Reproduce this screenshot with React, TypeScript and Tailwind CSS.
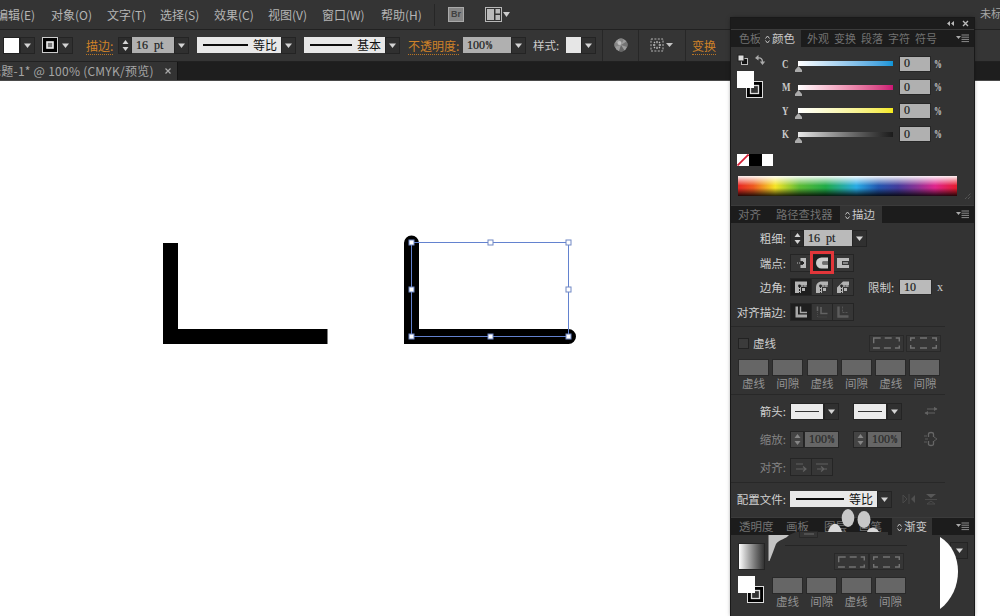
import React from "react";

type Kids = { children?: React.ReactNode; className?: string };

const cjk = "font-['Noto_Sans_CJK_SC',sans-serif]";
const serif = "font-['Liberation_Serif',serif]";

function Caret({ className = "" }: { className?: string }) {
  return (
    <svg width="7" height="5" viewBox="0 0 7 5" className={`shrink-0 ${className}`}>
      <path d="M0 0.5H7L3.5 5Z" fill="currentColor" />
    </svg>
  );
}

function DropButton({ className = "w-[15px]" }: { className?: string }) {
  return (
    <div className={`flex h-[17px] shrink-0 items-center justify-center border border-[#242424] bg-[#303030] text-[#d4d4d4] ${className}`}>
      <Caret />
    </div>
  );
}

function Stepper({ dim = false }: { dim?: boolean }) {
  return (
    <div className={`flex h-[17px] w-[14px] shrink-0 flex-col items-center justify-center gap-[3px] border border-[#242424] ${dim ? "bg-[#444] text-[#858585]" : "bg-[#2c2c2c] text-[#d4d4d4]"}`}>
      <svg width="7" height="4" viewBox="0 0 7 4"><path d="M0.5 4H6.5L3.5 0Z" fill="currentColor" /></svg>
      <svg width="7" height="4" viewBox="0 0 7 4"><path d="M0.5 0H6.5L3.5 4Z" fill="currentColor" /></svg>
    </div>
  );
}

function Percent({ className = "" }: { className?: string }) {
  return <span className={`inline-block w-[6px] origin-left scale-x-[0.65] font-bold ${className}`}>%</span>;
}

function Field({ children, className = "" }: Kids) {
  return (
    <div className={`flex h-4 shrink-0 items-center whitespace-pre pb-px pl-[4px] text-[12px] leading-none ${serif} ${className}`}>
      <span className="[-webkit-text-stroke:0.2px]">{children}</span>
    </div>
  );
}

function FillStroke() {
  return (
    <svg width="27" height="28" viewBox="0 0 27 28" className="shrink-0">
      <rect x="9.5" y="10.5" width="16" height="16" fill="#000" stroke="#ddd" />
      <rect x="13.5" y="14.5" width="8" height="8" fill="#333" stroke="#ddd" strokeWidth="1.3" />
      <rect x="0" y="0" width="17" height="17" fill="#fff" />
    </svg>
  );
}

function PanelMenu() {
  return (
    <svg width="14" height="9" viewBox="0 0 14 9" className="shrink-0">
      <path d="M0 2H5L2.5 5Z" fill="#aaa" />
      <path d="M5.5 1H13M5.5 3.2H13M5.5 5.4H13M5.5 7.6H13" stroke="#8c8c8c" />
    </svg>
  );
}

function Diamond() {
  return (
    <svg width="5" height="9" viewBox="0 0 5 9" className="mt-px shrink-0">
      <path d="M0.5 3.5L2.5 1L4.5 3.5M0.5 5.5L2.5 8L4.5 5.5" fill="none" stroke="#c4c4c4" />
    </svg>
  );
}

function TabBar({ children }: Kids) {
  return (
    <div className="flex h-[18px] shrink-0 items-end justify-between border-t border-[#3b3b3b] bg-[#1c1c1c] pr-1">
      <div className="flex items-end">{children}</div>
      <div className="pb-[4px]"><PanelMenu /></div>
    </div>
  );
}

function Tab({ children, className = "" }: Kids) {
  return <div className={`h-[17px] shrink-0 whitespace-nowrap leading-[17px] text-[#727272] ${className}`}>{children}</div>;
}

function ActiveTab({ children, className = "" }: Kids) {
  return (
    <div className={`flex h-[17px] shrink-0 items-center gap-[2px] whitespace-nowrap bg-[#333] pl-[5px] text-[11.5px] leading-[17px] text-[#c9c9c9] ${className}`}>
      <Diamond />
      {children}
    </div>
  );
}

function Label({ children, dim = false }: Kids & { dim?: boolean }) {
  return (
    <div className={`w-[59px] shrink-0 whitespace-nowrap pr-[4px] text-right text-[11.5px] leading-4 ${dim ? "text-[#858585]" : "text-[#d0d0d0]"}`}>
      <span>{children}</span>
      <span>:</span>
    </div>
  );
}

function Row({ children, className = "" }: Kids) {
  return <div className={`flex shrink-0 items-center ${className}`}>{children}</div>;
}

function IconButton({ children, on = false }: Kids & { on?: boolean }) {
  return (
    <div className={`flex h-[18px] w-[22px] shrink-0 items-center justify-center border border-[#252525] ${on ? "bg-[#1e1e1e]" : "bg-[#363636]"}`}>
      <svg width="14" height="14" viewBox="0 0 14 14" className="shrink-0">{children}</svg>
    </div>
  );
}

function CornerIcon({ outline, ink }: { outline: string; ink: string }) {
  return (
    <>
      <path d={outline} fill="#b4b4b4" />
      <circle cx="5.5" cy="6" r="1.4" fill={ink} />
      <path d="M5.5 6V13M5.5 6H13" stroke={ink} strokeDasharray="2 1" />
      <path d="M8 8H11V11H8Z" fill="#b4b4b4" />
    </>
  );
}

function Rule({ className = "" }: { className?: string }) {
  return <div className={`h-px w-[214px] shrink-0 bg-[#282828] ${className}`} />;
}

function DashButton({ corners = false }: { corners?: boolean }) {
  return (
    <div className="flex h-[17px] w-[35px] shrink-0 items-center justify-center border border-[#292929] bg-[#363636]">
      <svg width="27" height="12" viewBox="0 0 27 12">
        {corners ? (
          <path d="M0.7 4V1H5M10 1H17M22 1H26.3V4M26.3 8V11H22M17 11H10M5 11H0.7V8" fill="none" stroke="#737373" strokeWidth="1.4" />
        ) : (
          <rect x="0.7" y="1" width="25.6" height="10" fill="none" stroke="#737373" strokeWidth="1.4" strokeDasharray="7 4" />
        )}
      </svg>
    </div>
  );
}

const dashLabels = ["虚线", "间隙", "虚线", "间隙", "虚线", "间隙"];

function DashFields({ count }: { count: number }) {
  return (
    <div className="flex gap-[3.3px]">
      {dashLabels.slice(0, count).map((label, i) => (
        <div key={i} className="w-[31px] shrink-0">
          <div className="h-[17px] border border-[#292929] bg-[#666]" />
          <div className="whitespace-nowrap text-center text-[11.5px] leading-[15px] text-[#929292]">{label}</div>
        </div>
      ))}
    </div>
  );
}

function ArrowPicker() {
  return (
    <div className="flex w-[49px] shrink-0">
      <div className="flex h-[17px] w-[34px] items-center justify-center border border-[#252525] bg-[#ebebeb]">
        <div className="h-px w-6 bg-[#333]" />
      </div>
      <DropButton />
    </div>
  );
}

function ProfilePicker({ label, className = "" }: { label: string; className?: string }) {
  return (
    <div className={`flex h-4 shrink-0 items-center justify-between bg-[#e8e8e8] pl-[6px] pr-1 text-[12px] leading-4 text-[#111] ${className}`}>
      <div className="mr-[5px] h-[2px] grow bg-[#0c0c0c]" />
      <span>{label}</span>
    </div>
  );
}

const menuItems = [
  ["对象(O)", "w-[56px]"],
  ["文字(T)", "w-[53px]"],
  ["选择(S)", "w-[54px]"],
  ["效果(C)", "w-[54px]"],
  ["视图(V)", "w-[54px]"],
  ["窗口(W)", "w-[59px]"],
  ["帮助(H)", "w-[53px]"],
];

function MenuBar() {
  return (
    <div className="flex h-[29px] shrink-0 items-center overflow-hidden bg-[#343434] text-[12px] text-[#b4b4b4]">
      <div className="-ml-[4px] flex w-[438px] shrink-0">
        <div className="w-[55px] shrink-0 whitespace-nowrap">编辑(E)</div>
        {menuItems.map(([label, width]) => (
          <div key={label} className={`shrink-0 whitespace-nowrap ${width}`}>{label}</div>
        ))}
      </div>
      <div className="h-[22px] w-px bg-[#262626]" />
      <div className="ml-[13px] flex h-[15px] w-[16px] items-center justify-center border border-[#aaa] bg-[#858585] font-['Liberation_Sans',sans-serif] text-[9px] font-bold leading-none text-[#404040]">Br</div>
      <svg width="25" height="15" viewBox="0 0 25 15" className="ml-[21px] shrink-0">
        <rect x="0.5" y="0.5" width="16" height="14" fill="#333" stroke="#b8b8b8" />
        <path d="M2 2H9V13H2ZM10.5 2H15V6.5H10.5ZM10.5 8H15V13H10.5Z" fill="#bababa" />
        <path d="M18 5H25L21.5 10Z" fill="#ccc" />
      </svg>
      <div className="-mt-[3px] ml-auto w-5 shrink-0 whitespace-nowrap text-[11px] text-[#a5a5a5]">未标</div>
    </div>
  );
}

function OrangeLink({ children, className = "" }: Kids) {
  return (
    <div className={`shrink-0 whitespace-nowrap text-[12px] leading-[17px] text-[#cf8228] ${className}`}>
      <span className="border-b border-dotted border-[#b87424]">{children}</span>
    </div>
  );
}

function ControlBar() {
  return (
    <div className="flex h-[33px] shrink-0 items-center overflow-hidden border-b border-t border-[#212121] bg-[#353535] pb-px">
      <div className="ml-[3px] h-[17px] w-[17px] shrink-0 border border-[#222] bg-white" />
      <DropButton />
      <svg width="16" height="16" viewBox="0 0 16 16" className="ml-[7px] shrink-0">
        <rect x="0.5" y="0.5" width="15" height="15" fill="#000" stroke="#ccc" />
        <rect x="5" y="5" width="6" height="6" fill="#777" stroke="#eee" strokeWidth="1.6" />
      </svg>
      <DropButton />
      <OrangeLink className="ml-[13px] w-8">描边:</OrangeLink>
      <Stepper />
      <Field className="w-[42px] bg-[#b0b0b0] text-[#1c1c1c] [word-spacing:3px]">16 pt</Field>
      <DropButton />
      <ProfilePicker label="等比" className="ml-[8px] w-[84px]" />
      <DropButton />
      <ProfilePicker label="基本" className="ml-[8px] w-[81px]" />
      <DropButton />
      <OrangeLink className="ml-[8px] w-[55px]">不透明度:</OrangeLink>
      <Field className="w-[48px] bg-[#b0b0b0] text-[#1c1c1c]">100<Percent /></Field>
      <DropButton />
      <div className="ml-[7px] w-[33px] shrink-0 whitespace-nowrap text-[11.5px] leading-4 text-[#cdcdcd]">样式:</div>
      <div className="h-[16px] w-[15px] shrink-0 bg-[#e6e6e6]" />
      <DropButton />
      <div className="ml-[6px] h-[31px] w-px bg-[#272727]" />
      <svg width="14" height="14" viewBox="0 0 14 14" className="ml-[11px] shrink-0">
        <circle cx="7" cy="7" r="6.5" fill="#9c9c9c" />
        <path d="M7 7L5 0.8A6.5 6.5 0 0 1 10 1.2Z" fill="#828282" />
        <path d="M7 7L12.5 3.5A6.5 6.5 0 0 1 13 9Z" fill="#747474" />
        <path d="M7 7L10.5 12.5A6.5 6.5 0 0 1 5 13Z" fill="#666" />
        <path d="M7 7L0.8 9A6.5 6.5 0 0 1 1.2 4Z" fill="#858585" />
        <circle cx="5.5" cy="5" r="2" fill="#c0c0c0" />
      </svg>
      <div className="ml-[10px] h-[31px] w-px bg-[#272727]" />
      <svg width="23" height="14" viewBox="0 0 23 14" className="ml-[11px] shrink-0">
        <rect x="1" y="1" width="12" height="12" fill="none" stroke="#b5b5b5" strokeDasharray="2 1.4" />
        <path d="M7 3V5.3M7 8.7V11M3 7H5.3M8.7 7H11M4 4L5 5M10 4L9 5M4 10L5 9M10 10L9 9" stroke="#bbb" strokeWidth="1.3" />
        <path d="M16 5H23L19.5 9Z" fill="#c4c4c4" />
      </svg>
      <div className="ml-[12px] h-[31px] w-px bg-[#272727]" />
      <OrangeLink className="ml-[6px] w-[30px]">变换</OrangeLink>
    </div>
  );
}

function DocumentTabs() {
  return (
    <div className="flex h-[19px] shrink-0 overflow-hidden border-b border-[#4a4a4a] bg-[#1e1e1e]">
      <div className="flex w-[178px] shrink-0 items-center border-r border-[#151515] bg-[#333] text-[#a5a5a5]">
        <div className="-ml-[11px] w-[176px] shrink-0 whitespace-nowrap text-[12px] leading-[18px] tracking-[0.25px]">标题-1* @ 100% (CMYK/预览)</div>
        <svg width="6" height="6" viewBox="0 0 6 6" className="shrink-0"><path d="M0.5 0.5L5.5 5.5M5.5 0.5L0.5 5.5" stroke="#aaa" strokeWidth="1.2" /></svg>
      </div>
    </div>
  );
}

const handles = [
  [411.5, 161.5], [490.5, 161.5], [568.5, 161.5],
  [411.5, 208.5], [568.5, 208.5],
  [411.5, 255.5], [490.5, 255.5], [568.5, 255.5],
];

function Artwork() {
  return (
    <svg width="731" height="535" viewBox="0 0 731 535" className="block">
      <path d="M170.5 162V255.5H327.5" fill="none" stroke="#000" strokeWidth="15" />
      <path d="M411.5 162V255.5H568.5" fill="none" stroke="#000" strokeWidth="15" strokeLinecap="round" />
      <path d="M411.5 255.5V161.5H568.5V255.5Z" fill="none" stroke="#6382cf" />
      {handles.map(([x, y]) => (
        <rect key={`${x}-${y}`} x={x - 2.5} y={y - 2.5} width="5" height="5" fill="#fff" stroke="#7088c4" />
      ))}
    </svg>
  );
}

const channels = [
  ["C", "from-white to-[#0b95d8]"],
  ["M", "from-white to-[#cc1274]"],
  ["Y", "from-white to-[#f5ea14]"],
  ["K", "from-[#e8e8e8] to-[#1b1b1b]"],
];

function ColorPanel() {
  return (
    <>
      <TabBar>
        <Tab className="w-[29px] pl-[8px] text-[11px]">色板</Tab>
        <ActiveTab className="w-[41px]">颜色</ActiveTab>
        <Tab className="ml-[6px] w-[27px] text-[11px]">外观</Tab>
        <Tab className="w-[27px] text-[11px]">变换</Tab>
        <Tab className="w-[27px] text-[11px]">段落</Tab>
        <Tab className="w-[27px] text-[11px]">字符</Tab>
        <Tab className="w-[27px] text-[11px]">符号</Tab>
      </TabBar>
      <div className="flex h-[158px] shrink-0 flex-col bg-[#333]">
        <div className="flex pl-[6px] pt-[5px]">
          <div className="w-[45px] shrink-0">
            <svg width="30" height="12" viewBox="0 0 30 12" className="mb-[5px] mt-[2px] block">
              <rect x="4.5" y="4.5" width="6" height="6" fill="#111" stroke="#bbb" />
              <rect x="1" y="1" width="6" height="6" fill="#ddd" stroke="#222" />
              <path d="M21 4C24 3.5 25.5 5 25.5 8" fill="none" stroke="#aaa" strokeWidth="1.3" />
              <path d="M18 4L21.5 0.8V6.5ZM25.5 11L22.8 7.5H28.2Z" fill="#aaa" />
            </svg>
            <FillStroke />
          </div>
          <div>
            {channels.map(([name, gradient]) => (
              <div key={name} className={`flex h-[23.5px] items-center text-[12px] leading-none text-[#c9c9c9] ${serif}`}>
                <div className="w-[13px] origin-left scale-x-[0.75] font-bold">{name}</div>
                <div className="relative w-[98px]">
                  <div className={`ml-[3px] h-[5px] w-[95px] bg-linear-to-r ${gradient}`} />
                  <svg width="7" height="6" viewBox="0 0 7 6" className="absolute left-0 top-[5px]"><path d="M3.5 0L7 4V6H0V4Z" fill="#aaa" /></svg>
                </div>
                <Field className="ml-[6px] w-[32px] border border-[#262626] bg-[#b0b0b0] pl-[3px] text-[#1c1c1c]">0</Field>
                <Percent className="ml-[3px]" />
              </div>
            ))}
          </div>
        </div>
        <div className="ml-[6px] mt-[8px] flex h-3">
          <svg width="12" height="12" viewBox="0 0 12 12"><rect width="12" height="12" fill="#fff" /><path d="M0.5 11.5L11.5 0.5" stroke="#d51f35" strokeWidth="1.8" /></svg>
          <div className="w-[12.5px] bg-black" />
          <div className="w-[11.5px] bg-white" />
        </div>
        <div className="mt-[10px] flex items-end">
          <div className="ml-[7px] h-5 w-[219px] bg-[linear-gradient(to_bottom,rgba(255,255,255,.95),rgba(255,255,255,0)_48%,rgba(0,0,0,0)_60%,rgba(0,0,0,.85)),linear-gradient(to_right,#e72724,#ee5a20_7%,#f6e425_17%,#5dbb35_28%,#20ab48_40%,#28abe5_54%,#2257b0_64%,#433b9c_73%,#8e3295_82%,#e0258c_90%,#e51c2c)]" />
          <svg width="8" height="8" viewBox="0 0 8 8" className="-mb-1 ml-[7px]"><path d="M1 7L7 1M4 7L7 4" stroke="#666" strokeDasharray="1 1" /></svg>
        </div>
      </div>
    </>
  );
}

function StrokePanel() {
  return (
    <>
      <TabBar>
        <Tab className="w-[45px] pl-[7px] text-[11.5px]">对齐</Tab>
        <Tab className="w-[59px] text-[11.3px]">路径查找器</Tab>
        <ActiveTab className="ml-[5px] w-[42px]">描边</ActiveTab>
      </TabBar>
      <div className="flex h-[294px] shrink-0 flex-col bg-[#333] pt-[3px]">
        <Row className="h-6">
          <Label>粗细</Label>
          <Stepper />
          <Field className="w-[48px] bg-[#bababa] text-[#1c1c1c] [word-spacing:3px]">16 pt</Field>
          <DropButton />
        </Row>
        <Row className="h-[25px]">
          <Label>端点</Label>
          <IconButton>
            <path d="M6.5 2H12V12H6.5V9H9V5H6.5Z" fill="#bbb" />
            <path d="M3 7H9" stroke="#bbb" strokeDasharray="1 1" />
            <path d="M7 6H10V8H7Z" fill="#222" />
          </IconButton>
          <div className="relative -ml-px">
            <IconButton on>
              <path d="M13 1.5H6.5A5.5 5.5 0 0 0 6.5 12.5H13V8.5H7.5V5.5H13Z" fill="#ccc" />
              <path d="M8 7H13" stroke="#bbb" />
            </IconButton>
            <div className="absolute -bottom-[2.5px] -left-px -right-px -top-[2.5px] border-[3px] border-[#e2363a]" />
          </div>
          <div className="-ml-px">
            <IconButton>
              <path d="M1 2H13V5H6V9H13V12H1Z" fill="#bbb" />
              <path d="M7 7H12" stroke="#bbb" strokeWidth="1.2" />
            </IconButton>
          </div>
        </Row>
        <Row className="h-6">
          <Label>边角</Label>
          <IconButton on><CornerIcon ink="#1e1e1e" outline="M1 1.5H13V7H7V13H1Z" /></IconButton>
          <div className="-ml-px"><IconButton><CornerIcon ink="#2a2a2a" outline="M13 1.5H7C3 1.5 1 4 1 7.5V13H7V7H13Z" /></IconButton></div>
          <div className="-ml-px"><IconButton><CornerIcon ink="#2a2a2a" outline="M13 1.5H7L1 7.5V13H7V7H13Z" /></IconButton></div>
          <div className="ml-[14px] w-[31px] shrink-0 whitespace-nowrap text-[11.5px] leading-4 text-[#cdcdcd]">限制:</div>
          <Field className="w-[33px] border border-[#2a2a2a] bg-[#bababa] pl-[3px] text-[#1c1c1c]">10</Field>
          <span className={`ml-[5px] text-[12px] leading-none text-[#ccc] ${serif}`}>x</span>
        </Row>
        <Row className="h-[25px]">
          <Label>对齐描边</Label>
          <IconButton on>
            <path d="M1.5 1.5H4V9.5H13V12.5H1.5Z" fill="#a8a8a8" />
            <path d="M6.5 1.5V7.5H13" fill="none" stroke="#a8a8a8" strokeWidth="1.4" />
          </IconButton>
          <div className="-ml-px"><IconButton>
            <path d="M2.5 1.5V6M6 2V8.5H12.5" fill="none" stroke="#626262" strokeWidth="1.6" />
            <path d="M2.5 7V12H12" fill="none" stroke="#4c4c4c" strokeDasharray="1 1" />
          </IconButton></div>
          <div className="-ml-px"><IconButton>
            <path d="M2.5 1.5V11.5H12.5" fill="none" stroke="#5c5c5c" strokeWidth="2.4" />
            <path d="M6.5 1.5V7.5H12.5" fill="none" stroke="#555" strokeDasharray="2 1" />
          </IconButton></div>
        </Row>
        <Rule className="mt-[2px]" />
        <Row className="h-8 pl-[7px]">
          <div className="h-[11px] w-[11px] border border-[#222] bg-[#3b3b3b]" />
          <div className="ml-[4px] w-[116px] text-[11.5px] leading-4 text-[#cfcfcf]">虚线</div>
          <DashButton />
          <div className="ml-[2px]"><DashButton corners /></div>
        </Row>
        <div className="ml-[7px]"><DashFields count={6} /></div>
        <Rule className="mt-[3px]" />
        <Row className="h-8">
          <Label>箭头</Label>
          <ArrowPicker />
          <div className="ml-[14px]"><ArrowPicker /></div>
          <svg width="14" height="10" viewBox="0 0 14 10" className="ml-[22px]"><path d="M3 3H13M1 7H11" stroke="#626262" strokeWidth="1.2" /><path d="M10 0.8L13.5 3L10 5ZM4 5L0.5 7L4 9.2Z" fill="#626262" /></svg>
        </Row>
        <Row className="h-6">
          <Label dim>缩放</Label>
          <Stepper dim />
          <Field className="h-[17px] w-[35px] border border-[#262626] bg-[#666] pl-[2px] text-[#292929]">100<Percent /></Field>
          <div className="ml-[14px]"><Stepper dim /></div>
          <Field className="h-[17px] w-[35px] border border-[#262626] bg-[#666] pl-[2px] text-[#292929]">100<Percent /></Field>
          <svg width="14" height="16" viewBox="0 0 14 16" className="ml-[22px]"><path d="M4.5 6V3Q4.5 1.5 7 1.5T9.5 3V6M4.5 10V13Q4.5 14.5 7 14.5T9.5 13V10" fill="none" stroke="#666" strokeWidth="1.3" /><path d="M0 5H3M0 11H3M1 8H4M10 6L13 8L10 10" fill="none" stroke="#5c5c5c" /></svg>
        </Row>
        <Row className="h-[31px]">
          <Label dim>对齐</Label>
          <IconButton><path d="M2 4H9M2 9H12M9 6.5L12 9L9 11.5" fill="none" stroke="#606060" strokeWidth="1.2" /></IconButton>
          <div className="-ml-px"><IconButton><path d="M1 4H13M2 9H12M6 6.5L9 9L6 11.5" fill="none" stroke="#606060" strokeWidth="1.2" /></IconButton></div>
        </Row>
        <Rule />
        <Row className="h-8">
          <Label>配置文件</Label>
          <ProfilePicker label="等比" className="w-[87px]" />
          <DropButton />
          <svg width="36" height="14" viewBox="0 0 36 14" className="ml-[10px]"><path d="M1 3V11M1 3L5 7L1 11M7 2V12" fill="none" stroke="#4a4a4a" /><path d="M13 3V11L9 7Z" fill="#505050" /><path d="M24 2H34L29 6Z" fill="#585858" /><path d="M23 7.5H35M25 12H33L29 9Z" fill="none" stroke="#4a4a4a" /></svg>
        </Row>
      </div>
    </>
  );
}

function GradientPanel() {
  return (
    <>
      <TabBar>
        <Tab className="w-[55px] pl-[8px] text-[11.5px]">透明度</Tab>
        <Tab className="w-[38px] text-[11.5px]">画板</Tab>
        <Tab className="w-[35px] text-[11.5px]">图层</Tab>
        <Tab className="w-[33px] text-[11.5px]">画笔</Tab>
        <ActiveTab className="w-[40px]">渐变</ActiveTab>
      </TabBar>
      <div className="flex h-[81px] shrink-0 overflow-hidden bg-[#333] pl-[7px]">
        <div className="w-[31px] shrink-0 pt-2">
          <div className="h-[27px] w-[27px] border border-[#252525] bg-linear-to-r from-white to-[#333]" />
          <div className="mt-[6px]"><FillStroke /></div>
        </div>
        <div className="w-[171px] shrink-0">
          <div className="flex h-[11px] items-end">
            <div className="ml-[16px] h-px w-[122px] bg-[#252525]" />
          </div>
          <div className="mt-[7px] flex pl-[65px]">
            <DashButton />
            <DashButton corners />
          </div>
          <div className="ml-[3px] mt-[7px]"><DashFields count={4} /></div>
        </div>
        <svg width="18" height="76" viewBox="0 0 18 76" className="relative z-10 shrink-0"><path d="M0 2C24 16 24 56 0 74Z" fill="#fff" /></svg>
        <div className="-ml-2 mt-[7px]"><DropButton className="w-[18px]" /></div>
      </div>
      <svg width="120" height="60" viewBox="0 0 120 60" className="absolute left-[37px] top-[490px]">
        <path d="M21 27L28 24H120V32H21Z" fill="#333" />
        <path d="M0.5 27H21C18 31 12 31 8 36C6 41 4 47 1.5 53H0.5Z" fill="#c4c4c4" />
        <path d="M31.5 23.5H49.5V29.5H31.5Z" fill="#353535" stroke="#282828" />
        <path d="M36 26H46" stroke="#505050" strokeWidth="2" />
        <ellipse cx="80" cy="10" rx="6.3" ry="9" fill="#c8c8c8" />
        <ellipse cx="96" cy="11.5" rx="6.5" ry="8.5" fill="#c8c8c8" />
        <path d="M60 24C63 13 71 13 74 24Z" fill="#d8d8d8" />
        <path d="M99 24C100 19 108 18 111 24Z" fill="#d8d8d8" />
      </svg>
    </>
  );
}

export default function App() {
  return (
    <div className={`relative flex h-[616px] w-[1000px] flex-col overflow-hidden bg-white ${cjk}`}>
      <MenuBar />
      <ControlBar />
      <DocumentTabs />
      <Artwork />
      <div className="absolute left-[731px] top-[18px] flex h-[598px] w-[243px] flex-col bg-[#1c1c1c] shadow-[0_0_0_1px_#191919,0_0_4px_rgba(0,0,0,0.5)]">
        <div className="flex h-[11px] shrink-0 items-center justify-end pr-[5px]">
          <svg width="22" height="7" viewBox="0 0 22 7"><path d="M3 1V6L0 3.5ZM7 1V6L4 3.5Z" fill="#bbb" /><path d="M16 1L21 6M21 1L16 6" stroke="#bbb" strokeWidth="1.4" /></svg>
        </div>
        <ColorPanel />
        <StrokePanel />
        <GradientPanel />
      </div>
    </div>
  );
}
